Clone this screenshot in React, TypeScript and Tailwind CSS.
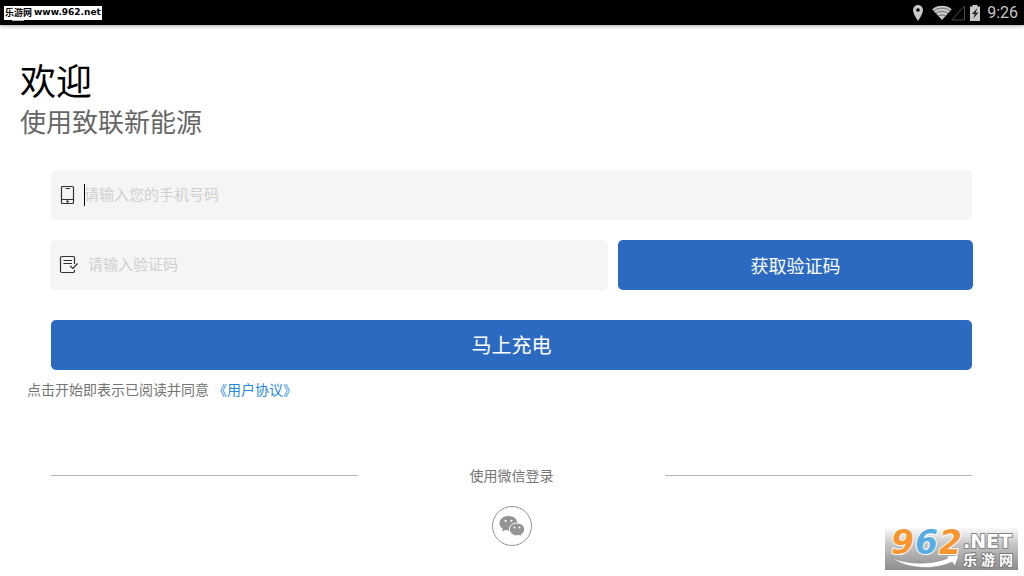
import React, { useState } from 'react';

function StatusBar() {
  return (
    <header className="relative flex h-[25px] items-center justify-between bg-black pl-1 pr-[6px] shadow-[0_1px_4px_rgba(0,0,0,0.35)]">
      <span className="absolute left-3 top-[18px] h-[3px] w-3 bg-[#b4b4b4]" />
      <span className="relative flex h-[14px] items-center gap-[2px] whitespace-nowrap bg-white px-px text-black">
        <span className="text-[9px] font-bold leading-none">乐游网</span>
        <span className="font-['DejaVu_Sans',sans-serif] text-[9px] font-bold leading-none">www.962.net</span>
      </span>
      <div className="flex items-center text-[#c8c8c8]">
        <svg width="12" height="18" viewBox="0 0 12 18" fill="currentColor" aria-hidden="true">
          <path fillRule="evenodd" d="M6 1a5 5 0 0 0-5 5c0 4 5 11 5 11s5-7 5-11a5 5 0 0 0-5-5Zm0 3.2a1.8 1.8 0 1 1 0 3.6 1.8 1.8 0 0 1 0-3.6Z" />
        </svg>
        <svg className="ml-2" width="20" height="16" viewBox="0 0 20 16" aria-hidden="true">
          <path d="M10 15 .2 4.2C5.6-.3 14.4-.3 19.8 4.2Z" fill="currentColor" />
          <path d="M1.500 6C6 2.200 14 2.200 18.500 6M3.800 8.600c3.400-2.900 9-2.900 12.400 0M6.200 11.200c2-1.700 5.600-1.700 7.600 0" stroke="#444" strokeWidth=".7" fill="none" />
        </svg>
        <svg className="-ml-px" width="14" height="16" viewBox="0 0 14 16" fill="none" stroke="#4a4a4a" aria-hidden="true">
          <path d="M13.500 1v14H.8Z" />
        </svg>
        <svg className="ml-1" width="12" height="16" viewBox="0 0 12 16" aria-hidden="true">
          <path d="M3.500 0h5v1.500H11V16H1V1.500h2.500Z" fill="currentColor" />
          <path d="M8.500 3 2.800 9h3l-1.600 4.500L9.600 7.600H6.700Z" fill="#222" />
        </svg>
        <span className="ml-[6px] font-[Roboto,sans-serif] text-base leading-none">9:26</span>
      </div>
    </header>
  );
}

function PhoneIcon() {
  return (
    <svg width="20" height="20" viewBox="0 0 20 20" fill="none" stroke="#333" strokeWidth="1.200" aria-hidden="true">
      <rect x="4.500" y="1.500" width="12" height="17" rx="1" />
      <path d="M4.500 14.500h12M8.500 3.500h4.500" />
      <circle cx="10.500" cy="16.500" r=".6" fill="#333" />
    </svg>
  );
}

function CodeIcon() {
  return (
    <svg width="20" height="20" viewBox="0 0 20 20" fill="none" stroke="#333" strokeWidth="1.200" aria-hidden="true">
      <path d="M15.500 9V3A1.500 1.500 0 0 0 14 1.500H3A1.500 1.500 0 0 0 1.500 3v13A1.500 1.500 0 0 0 3 17.500h11a1.500 1.500 0 0 0 1.500-1.500V15" />
      <path d="M4.500 5.500h8.500M4.500 8.500h8.500M11 11l3 2.500 4.500-5" />
    </svg>
  );
}

function WechatIcon() {
  return (
    <svg width="28" height="24" viewBox="0 0 28 24" aria-hidden="true">
      <path d="M10.500 2C5.200 2 1.500 5.200 1.500 9.200c0 2.300 1.200 4.200 3.300 5.600L4 17.500l3.200-1.600c1.100.3 2.200.5 3.300.5 5.300 0 9-3.200 9-7.200S15.800 2 10.500 2Z" fill="#949494" />
      <path d="M19 9c-4.300 0-7.600 2.800-7.600 6.400 0 3.500 3.300 6.400 7.600 6.400.9 0 1.800-.2 2.600-.4l2.600 1.300-.7-2.300c1.900-1.200 3.100-2.900 3.100-5 0-3.600-3.300-6.400-7.600-6.400Z" fill="#949494" stroke="#fff" />
      <circle cx="7.600" cy="6.800" r="1.100" fill="#fff" />
      <circle cx="13.400" cy="6.800" r="1.100" fill="#fff" />
      <circle cx="16.500" cy="13.500" r=".9" fill="#fff" />
      <circle cx="21.500" cy="13.500" r=".9" fill="#fff" />
    </svg>
  );
}

function SiteBadge() {
  return (
    <svg
      className="absolute bottom-[6px] right-[6px] overflow-visible"
      width="133"
      height="42"
      viewBox="0 0 133 42"
      role="img"
      aria-label="962.NET 乐游网"
    >
      <defs>
        <linearGradient id="badge" x1="0" y1="0" x2="0" y2="1">
          <stop offset="0" stopColor="#fafafa" />
          <stop offset=".4" stopColor="#c4c4c4" />
          <stop offset="1" stopColor="#8c8c8c" />
        </linearGradient>
      </defs>
      <rect width="133" height="42" fill="url(#badge)" />
      <path d="M6 29c14 8 42 8 57 1l-2-2 13-1-4 11-3-4C51 42 21 42 6 29Z" fill="#fff" stroke="#8a8a8a" strokeWidth=".6" />
      <g className="font-['DejaVu_Sans',sans-serif] font-bold" strokeLinejoin="round" paintOrder="stroke">
        <text x="6" y="26" fontSize="33" fontStyle="italic" stroke="#fff" strokeWidth="2">
          <tspan fill="#f7962f">9</tspan>
          <tspan dx="1" fill="#58ace2">6</tspan>
          <tspan dx="1" fill="#f7962f">2</tspan>
        </text>
        <text x="78" y="20" fontSize="19" fill="#fff" stroke="#858585" strokeWidth="2">.NET</text>
      </g>
      <g className="font-['Noto_Sans_CJK_SC',sans-serif] font-bold" fontSize="14" fill="#fff" stroke="#7c7c7c" strokeWidth="2" strokeLinejoin="round" paintOrder="stroke">
        <text x="78" y="37">乐</text>
        <text x="96" y="37">游</text>
        <text x="114" y="37">网</text>
      </g>
    </svg>
  );
}

function App() {
  const [phone, setPhone] = useState('');
  const [code, setCode] = useState('');

  return (
    <div className="relative min-h-screen bg-white font-['Noto_Sans_CJK_SC',sans-serif]">
      <StatusBar />

      <main className="pt-[34px]">
        <div className="px-5">
          <h1 className="text-4xl leading-10 text-black">欢迎</h1>
          <p className="mt-1 text-[26px] leading-9 text-[#666]">使用致联新能源</p>
        </div>

        <form className="mt-[31px] pl-[51px] pr-[52px]" onSubmit={(e) => e.preventDefault()}>
          <div className="relative flex h-[50px] items-center rounded-[5px] bg-[#f5f5f5] pl-[6px]">
            <PhoneIcon />
            {!phone && <span className="absolute left-[33px] h-[22px] w-px bg-black" />}
            <input
              type="tel"
              aria-label="手机号码"
              placeholder="请输入您的手机号码"
              value={phone}
              onChange={(e) => setPhone(e.target.value)}
              className="ml-[7px] h-full min-w-0 flex-1 bg-transparent pb-1 text-[15px] outline-none placeholder:text-[#d0d0d0]"
            />
          </div>

          <div className="-mx-px mt-5 grid grid-cols-[11fr_7fr] gap-[10px]">
            <div className="flex h-[50px] min-w-0 items-center rounded-[5px] bg-[#f5f5f5] pl-[9px]">
              <CodeIcon />
              <input
                type="text"
                aria-label="验证码"
                placeholder="请输入验证码"
                value={code}
                onChange={(e) => setCode(e.target.value)}
                className="ml-[9px] h-full min-w-0 flex-1 bg-transparent pb-1 text-[15px] outline-none placeholder:text-[#d0d0d0]"
              />
            </div>
            <button type="button" className="h-[50px] min-w-0 rounded-[5px] bg-[#2c6ac1] text-lg text-white">
              获取验证码
            </button>
          </div>

          <button type="submit" className="mt-[30px] h-[50px] w-full rounded-[5px] bg-[#2c6ac1] text-xl text-white">
            马上充电
          </button>
        </form>

        <p className="mt-[9px] px-[27px] text-sm text-[#757575]">
          点击开始即表示已阅读并同意
          <a href="#agreement" className="ml-1 text-[#1e88e5]">《用户协议》</a>
        </p>

        <section className="mt-[66px] pl-[51px] pr-[52px]">
          <div className="grid grid-cols-3 items-center">
            <span className="h-px bg-[#b4b4b4]" />
            <h2 className="text-center text-sm text-[#757575]">使用微信登录</h2>
            <span className="h-px bg-[#b4b4b4]" />
          </div>
          <button
            type="button"
            aria-label="微信登录"
            className="mx-auto mt-[21px] flex size-10 items-center justify-center rounded-full border border-[#949494]"
          >
            <WechatIcon />
          </button>
        </section>
      </main>

      <SiteBadge />
    </div>
  );
}

export default App;
